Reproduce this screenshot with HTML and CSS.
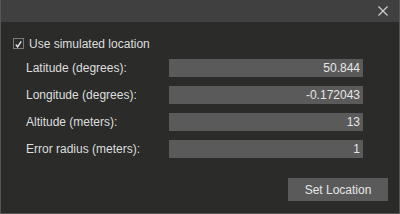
FILE: index.html
```html
<!DOCTYPE html>
<html lang="en">
<head>
  <meta charset="UTF-8">
  <title>Location</title>
  <link rel="stylesheet" href="styles.css">
</head>
<body>
  <div class="window">
    <div class="titlebar">
      <button class="close" aria-label="Close">
        <svg width="10" height="10" viewBox="0 0 10 10"><path d="M0.5 0.5 L9.5 9.5 M9.5 0.5 L0.5 9.5" stroke="#d0d0d0" stroke-width="1.2" fill="none"/></svg>
      </button>
    </div>
    <div class="content">
      <label class="check-row">
        <span class="checkbox">
          <svg width="11" height="11" viewBox="0 0 11 11"><path d="M2.2 5.6 L4.4 8.3 L8.8 1.8" stroke="#f0f0f0" stroke-width="1.7" fill="none"/></svg>
        </span>
        <span>Use simulated location</span>
      </label>
      <div class="fields">
        <span class="label">Latitude (degrees):</span>
        <input type="text" value="50.844">
        <span class="label">Longitude (degrees):</span>
        <input type="text" value="-0.172043">
        <span class="label">Altitude (meters):</span>
        <input type="text" value="13">
        <span class="label">Error radius (meters):</span>
        <input type="text" value="1">
      </div>
      <div class="actions">
        <button class="set-btn">Set Location</button>
      </div>
    </div>
  </div>
</body>
</html>
```

FILE: styles.css
```css
body { margin: 0; background: #2b2c2a; font-family: "Segoe UI", "Liberation Sans", sans-serif; font-size: 12px; color: #dedede; }
.window { width: 400px; height: 214px; box-sizing: border-box; border: 1px solid #555655; border-top: none; background: #2b2c2a; display: flex; flex-direction: column; }
.titlebar { height: 22px; background: #3f403f; display: flex; justify-content: flex-end; align-items: center; padding-right: 11px; }
.close { background: none; border: none; padding: 0; width: 10px; height: 10px; display: flex; cursor: pointer; }
.content { padding: 15px 11px 0 12px; }
.check-row { display: flex; align-items: center; gap: 5px; height: 13px; }
.checkbox { width: 11px; height: 11px; box-sizing: border-box; border: 1px solid #7a7a7a; display: flex; }
.fields { display: grid; grid-template-columns: 143px 194px; row-gap: 9px; margin: 9px 0 0 13px; align-items: center; }
.label { line-height: 18px; }
.fields input { height: 18px; box-sizing: border-box; border: none; background: #5a5a5a; color: #e6e6e6; font: inherit; text-align: right; padding: 0 3px; outline: none; }
.actions { display: flex; justify-content: flex-end; margin-top: 20px; }
.set-btn { width: 100px; height: 23px; background: #5a5a5a; color: #e6e6e6; border: none; font: inherit; cursor: pointer; }
```
